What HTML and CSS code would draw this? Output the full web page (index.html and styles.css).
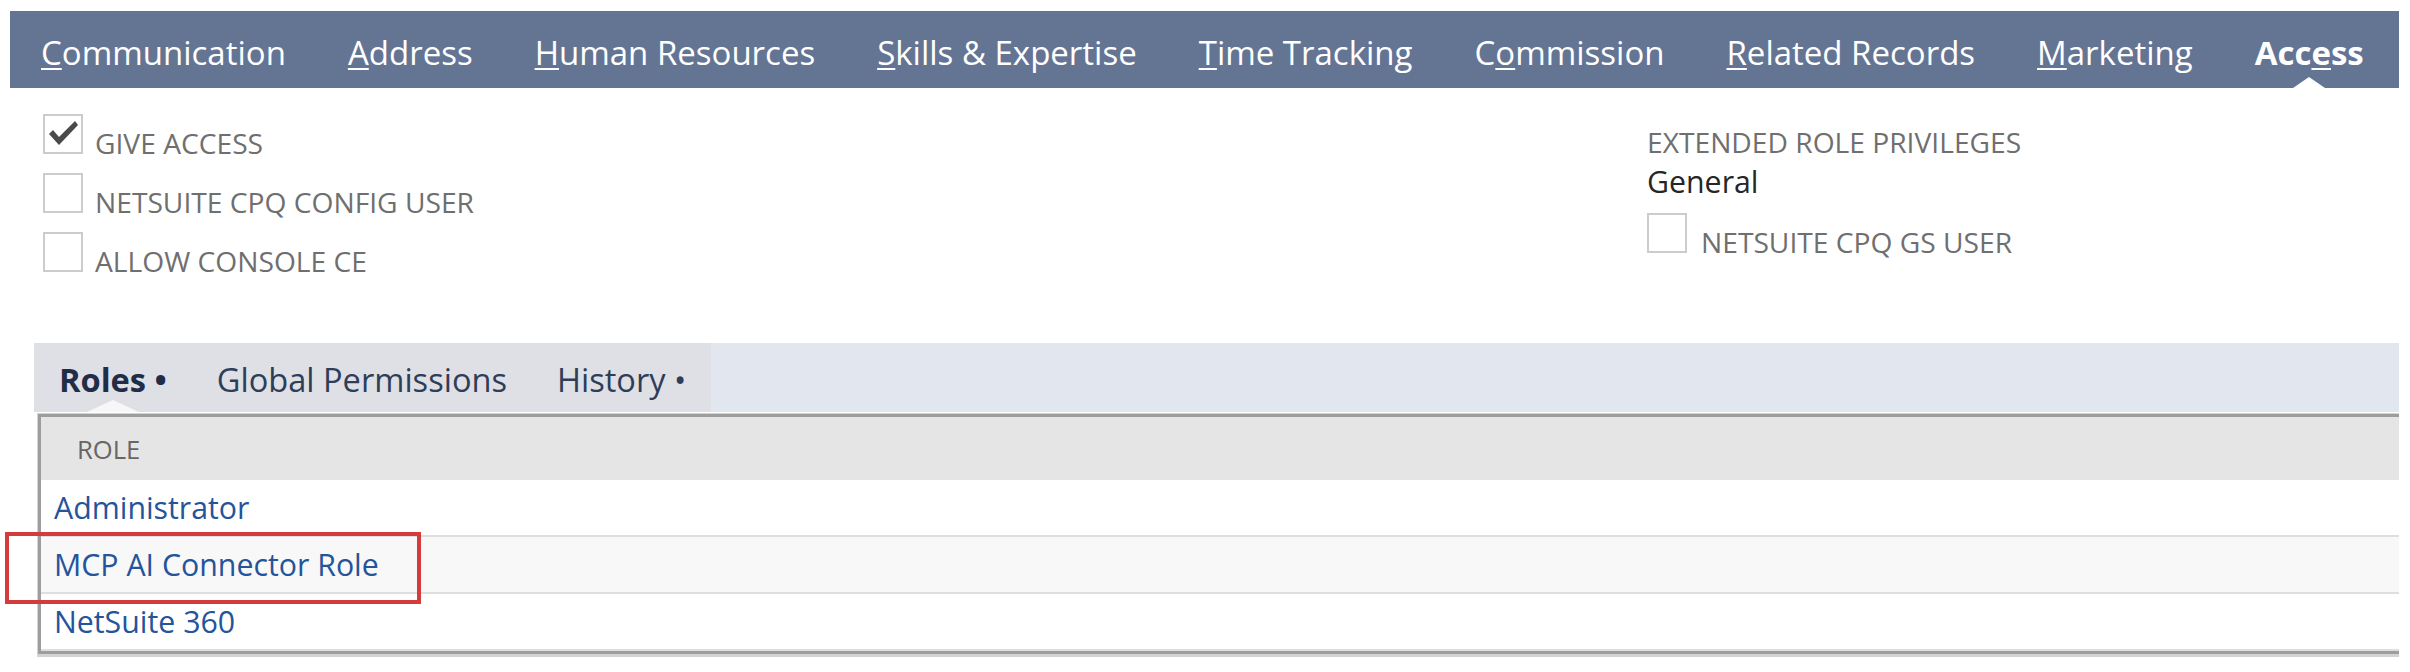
FILE: index.html
```html
<!DOCTYPE html>
<html lang="en">
<head>
<meta charset="utf-8">
<title>Employee – Access</title>
<link rel="stylesheet" href="styles.css">
</head>
<body>
<div class="page">
  <nav class="tabs">
    <a class="tab"><u>C</u>ommunication</a>
    <a class="tab"><u>A</u>ddress</a>
    <a class="tab"><u>H</u>uman Resources</a>
    <a class="tab"><u>S</u>kills &amp; Expertise</a>
    <a class="tab"><u>T</u>ime Tracking</a>
    <a class="tab">C<u>o</u>mmission</a>
    <a class="tab"><u>R</u>elated Records</a>
    <a class="tab"><u>M</u>arketing</a>
    <a class="tab active">Acc<u>e</u>ss</a>
  </nav>

  <section class="fields">
    <div class="col col-left">
      <div class="check-row"><span class="box"><svg width="36" height="36" viewBox="0 0 36 36"><path d="M4 18 L8 14 L14 21 L30 5 L33 9 L14 29 Z" fill="#4a4a4a"/></svg></span><span class="check-label">GIVE ACCESS</span></div>
      <div class="check-row"><span class="box"></span><span class="check-label">NETSUITE CPQ CONFIG USER</span></div>
      <div class="check-row"><span class="box"></span><span class="check-label">ALLOW CONSOLE CE</span></div>
    </div>
    <div class="col col-right">
      <div class="field-label">EXTENDED ROLE PRIVILEGES</div>
      <div class="field-value">General</div>
      <div class="check-row"><span class="box"></span><span class="check-label">NETSUITE CPQ GS USER</span></div>
    </div>
  </section>

  <section class="subtabs-area">
    <div class="subtab-bar">
      <div class="subtabs">
        <a class="subtab active">Roles •</a>
        <a class="subtab">Global Permissions</a>
        <a class="subtab">History •</a>
      </div>
    </div>
    <div class="grid-frame">
      <div class="grid">
        <div class="grid-head">ROLE</div>
        <div class="grid-row"><a>Administrator</a></div>
        <div class="grid-row alt"><a>MCP AI Connector Role</a><span class="annot"></span></div>
        <div class="grid-row"><a>NetSuite 360</a></div>
      </div>
    </div>
  </section>
</div>
</body>
</html>
```

FILE: styles.css
```css
html, body {
  margin: 0;
  padding: 0;
  background: #ffffff;
}

body {
  font-family: "Open Sans", "Liberation Sans", sans-serif;
}

.page {
  padding: 11px 11px 0 10px;
}

/* main tab bar */
.tabs {
  display: flex;
  height: 77px;
  background: #647594;
}

.tab {
  position: relative;
  padding: 19px 31px 0;
  font-size: 33px;
  line-height: normal;
  color: #ffffff;
  white-space: nowrap;
}

.tab u {
  text-decoration-thickness: 2px;
  text-underline-offset: 3px;
}

.tab.active {
  font-weight: 700;
}

.tab.active::after {
  content: "";
  position: absolute;
  left: 50%;
  bottom: 0;
  margin-left: -16px;
  border-left: 16px solid transparent;
  border-right: 16px solid transparent;
  border-bottom: 11px solid #ffffff;
}

/* field area */
.fields {
  display: grid;
  grid-template-columns: 1604px 1fr;
  height: 255px;
  box-sizing: border-box;
  padding: 26px 0 0 33px;
}

.check-row {
  height: 59px;
  font-size: 28px;
  white-space: nowrap;
}

.box {
  display: inline-block;
  width: 40px;
  height: 40px;
  box-sizing: border-box;
  border: 2px solid #cccccc;
  background: #ffffff;
  vertical-align: baseline;
}

.box svg {
  display: block;
}

.check-label {
  margin-left: 12px;
  font-size: 28.2px;
  color: #6f6f6f;
}

.col-right {
  padding-top: 9px;
}

.col-right .check-label {
  margin-left: 14px;
}

.field-label {
  font-size: 28.2px;
  color: #6f6f6f;
}

.field-value {
  font-size: 30.3px;
  color: #262626;
}

.col-right .check-row {
  margin-top: 11px;
}

/* subtabs */
.subtabs-area {
  margin-left: 24px;
}

.subtab-bar {
  display: flex;
  height: 69px;
  background: #e1e6ef;
}

.subtabs {
  display: flex;
  background: #dfe0e6;
}

.subtab {
  position: relative;
  padding: 14px 25px 0;
  font-size: 32.6px;
  line-height: normal;
  color: #2e3d58;
  white-space: nowrap;
}

.subtab.active {
  font-weight: 700;
  color: #1f2d48;
}

.subtab.active::after {
  content: "";
  position: absolute;
  left: 50%;
  bottom: 0;
  margin-left: -26px;
  border-left: 26px solid transparent;
  border-right: 26px solid transparent;
  border-bottom: 12px solid #f7f7f7;
}

/* grid */
.grid-frame {
  margin: 1px 0 0 3px;
  border: 1px solid #d3d3d3;
  border-right: none;
  border-bottom-width: 3px;
}

.grid {
  border: 3px solid #9d9d9d;
  border-right: none;
}

.grid-head {
  height: 63px;
  box-sizing: border-box;
  padding: 15px 0 0 36px;
  background: #e5e5e5;
  font-size: 25.6px;
  color: #666666;
}

.grid-row {
  position: relative;
  height: 57px;
  box-sizing: border-box;
  padding: 7px 0 0 13px;
  border-bottom: 2px solid #dedede;
  background: #ffffff;
  font-size: 30.3px;
}

.grid-row.alt {
  background: #f8f8f8;
}

.grid-row a {
  color: #24549a;
  text-decoration: none;
}

.annot {
  position: absolute;
  z-index: 2;
  top: -5px;
  left: -36px;
  width: 416px;
  height: 72px;
  box-sizing: border-box;
  border: 4px solid #d63b3b;
  pointer-events: none;
}
```
